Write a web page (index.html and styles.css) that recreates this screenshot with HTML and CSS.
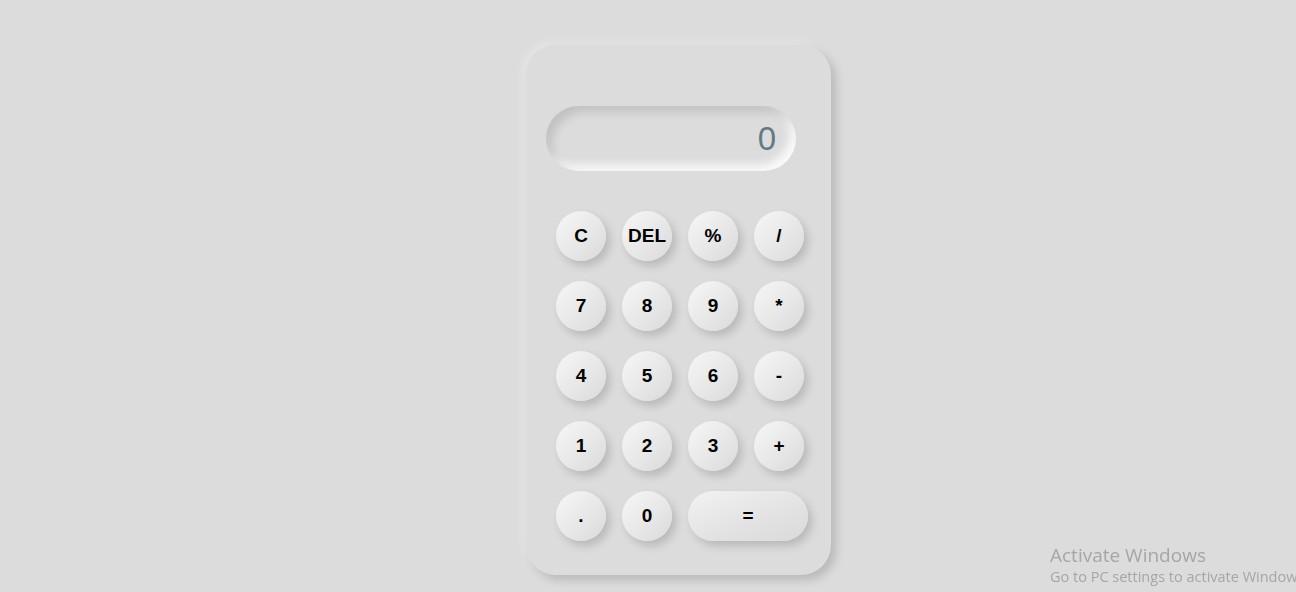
FILE: index.html
```html
<!DOCTYPE html>
<html lang="en">
<head>
<meta charset="utf-8">
<title>Calculator</title>
<link rel="stylesheet" href="styles.css">
</head>
<body>
<div class="page">
  <div class="calculator">
    <div class="display">0</div>
    <div class="keys">
      <button class="key">C</button>
      <button class="key">DEL</button>
      <button class="key">%</button>
      <button class="key">/</button>
      <button class="key">7</button>
      <button class="key">8</button>
      <button class="key">9</button>
      <button class="key">*</button>
      <button class="key">4</button>
      <button class="key">5</button>
      <button class="key">6</button>
      <button class="key">-</button>
      <button class="key">1</button>
      <button class="key">2</button>
      <button class="key">3</button>
      <button class="key">+</button>
      <button class="key">.</button>
      <button class="key">0</button>
      <button class="key key-equals">=</button>
    </div>
  </div>
</div>
<div class="activate">
  <div class="activate-title">Activate Windows</div>
  <div class="activate-sub">Go to PC settings to activate Windows.</div>
</div>
</body>
</html>
```

FILE: styles.css
```css
html, body {
  margin: 0;
  padding: 0;
  background: #dcdcdc;
  height: 100%;
  overflow: hidden;
  font-family: "Liberation Sans", Arial, sans-serif;
}

.page {
  padding: 45px 0 0 526px;
}

.calculator {
  width: 305px;
  height: 530px;
  box-sizing: border-box;
  padding: 61px 20px 0 20px;
  border-radius: 30px;
  background: #dcdcdc;
  box-shadow: 5px 5px 10px rgba(0, 0, 0, 0.16), -4px -4px 8px rgba(255, 255, 255, 0.25);
}

.display {
  width: 250px;
  height: 65px;
  box-sizing: border-box;
  border-radius: 33px;
  background: #dcdcdc;
  box-shadow: inset 6px 6px 10px rgba(0, 0, 0, 0.12), inset -6px -6px 10px rgba(255, 255, 255, 0.85);
  text-align: right;
  padding-right: 20px;
  font-size: 33px;
  line-height: 65px;
  color: #637a84;
}

.keys {
  margin: 40px 0 0 10px;
  display: grid;
  grid-template-columns: repeat(4, 50px);
  grid-auto-rows: 50px;
  column-gap: 16px;
  row-gap: 20px;
}

.key {
  width: 50px;
  height: 50px;
  border: none;
  padding: 0;
  border-radius: 25px;
  background: linear-gradient(135deg, #f7f7f7 0%, #e6e6e6 60%, #dadada 100%);
  box-shadow: 4px 5px 8px rgba(0, 0, 0, 0.16);
  font-family: "Liberation Sans", Arial, sans-serif;
  font-weight: bold;
  font-size: 19px;
  color: #000;
}

.key-equals {
  grid-column: span 2;
  width: 120px;
  background: linear-gradient(160deg, #f2f2f2 0%, #e2e2e2 60%, #dadada 100%);
}

.activate {
  position: fixed;
  left: 1050px;
  top: 543px;
  white-space: nowrap;
  color: #a6a6a6;
  font-family: "Open Sans", "Noto Sans", sans-serif;
}

.activate-title {
  font-size: 19px;
  line-height: 24px;
}

.activate-sub {
  font-size: 14.5px;
  line-height: 20px;
}
```
